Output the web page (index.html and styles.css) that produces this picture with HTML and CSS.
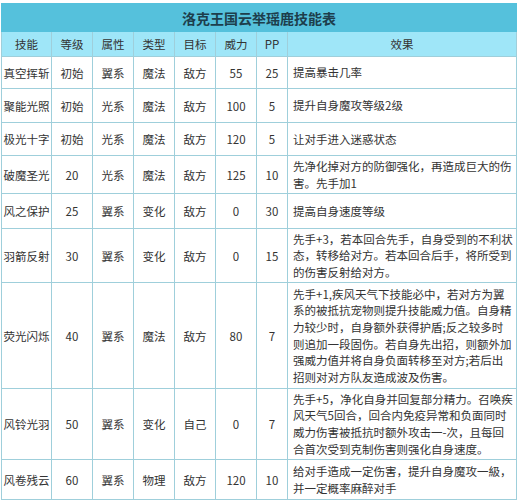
FILE: index.html
```html
<!DOCTYPE html>
<html lang="zh-CN">
<head>
<meta charset="utf-8">
<link rel="stylesheet" href="styles.css">
</head>
<body>
<table class="skills">
  <colgroup>
    <col class="c-name"><col class="c-n"><col class="c-n"><col class="c-n"><col class="c-n"><col class="c-n"><col class="c-pp"><col class="c-eff">
  </colgroup>
  <tr class="title"><th colspan="8">洛克王国云举瑶鹿技能表</th></tr>
  <tr class="head"><th>技能</th><th>等级</th><th>属性</th><th>类型</th><th>目标</th><th>威力</th><th>PP</th><th>效果</th></tr>
  <tr class="r1"><td>真空挥斩</td><td>初始</td><td>翼系</td><td>魔法</td><td>敌方</td><td>55</td><td>25</td><td class="eff">提高暴击几率</td></tr>
  <tr class="r2"><td>聚能光照</td><td>初始</td><td>光系</td><td>魔法</td><td>敌方</td><td>100</td><td>5</td><td class="eff">提升自身魔攻等级2级</td></tr>
  <tr class="r3"><td>极光十字</td><td>初始</td><td>光系</td><td>魔法</td><td>敌方</td><td>120</td><td>5</td><td class="eff">让对手进入迷惑状态</td></tr>
  <tr class="r4"><td>破魔圣光</td><td>20</td><td>光系</td><td>魔法</td><td>敌方</td><td>125</td><td>10</td><td class="eff">先净化掉对方的防御强化，再造成巨大的伤<br>害。先手加1</td></tr>
  <tr class="r5"><td>风之保护</td><td>25</td><td>翼系</td><td>变化</td><td>敌方</td><td>0</td><td>30</td><td class="eff">提高自身速度等级</td></tr>
  <tr class="r6"><td>羽箭反射</td><td>30</td><td>翼系</td><td>变化</td><td>敌方</td><td>0</td><td>15</td><td class="eff">先手+3，若本回合先手，自身受到的不利状<br>态，转移给对方。若本回合后手，将所受到<br>的伤害反射给对方。</td></tr>
  <tr class="r7"><td>荧光闪烁</td><td>40</td><td>翼系</td><td>魔法</td><td>敌方</td><td>80</td><td>7</td><td class="eff">先手+1,疾风天气下技能必中，若对方为翼<br>系的被抵抗宠物则提升技能威力值。自身精<br>力较少时，自身额外获得护盾;反之较多时<br>则追加一段固伤。若自身先出招，则额外加<br>强威力值并将自身负面转移至对方;若后出<br>招则对对方队友造成波及伤害。</td></tr>
  <tr class="r8"><td>风铃光羽</td><td>50</td><td>翼系</td><td>变化</td><td>自己</td><td>0</td><td>7</td><td class="eff">先手+5，净化自身并回复部分精力。召唤疾<br>风天气5回合，回合内免疫异常和负面同时<br>威力伤害被抵抗时额外攻击一-次，且每回<br>合首次受到克制伤害则强化自身速度。</td></tr>
  <tr class="r9"><td>风卷残云</td><td>60</td><td>翼系</td><td>物理</td><td>敌方</td><td>120</td><td>10</td><td class="eff">给对手造成一定伤害，提升自身魔攻一級，<br>并一定概率麻醉对手</td></tr>
</table>
</body>
</html>
```

FILE: styles.css
```css
html, body {
  margin: 0;
  padding: 0;
  background: #ffffff;
}
body {
  padding: 3px 0 0 1px;
  font-family: "Noto Sans CJK SC", "Noto Sans", sans-serif;
}
.skills {
  border-collapse: collapse;
  table-layout: fixed;
  width: 516px;
  font-size: 11.5px;
  color: #333333;
}
.c-name { width: 50px; }
.c-n { width: 41px; }
.c-pp { width: 31px; }
.c-eff { width: 229px; }
.skills th, .skills td {
  border: 1px solid #9fcfdb;
  padding: 0;
  text-align: center;
  vertical-align: middle;
  font-weight: normal;
  white-space: nowrap;
  overflow: hidden;
}
.title th {
  background: #55c1dc;
  height: 27px;
  font-size: 14px;
  font-weight: bold;
  color: #1d3e4c;
  border-color: #55c1dc;
}
.head th {
  background: #9fe6f8;
  height: 24px;
  color: #333333;
}
.skills td.eff {
  text-align: left;
  padding: 0 3px 0 5px;
  line-height: 16.6px;
}
.r1 td { height: 31px; }
.r2 td { height: 33px; }
.r3 td { height: 32px; }
.r4 td { height: 37px; }
.r5 td { height: 34px; }
.r6 td { height: 53px; }
.r7 td { height: 105px; }
.r8 td { height: 70px; }
.r9 td { height: 39px; }
```
